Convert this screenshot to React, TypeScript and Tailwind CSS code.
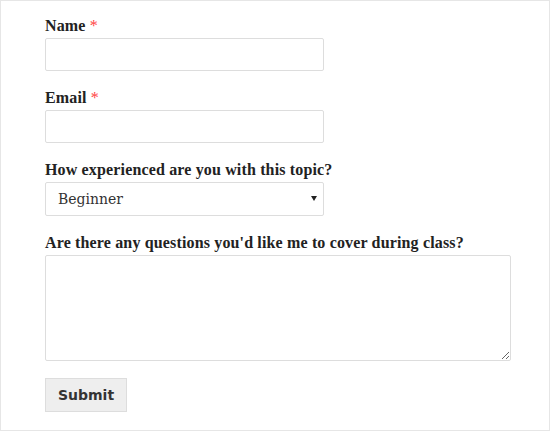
import React from 'react';

const labelCls = "block text-[16px] leading-[22px] font-bold tracking-[0.15px] text-[#222] mb-px [font-family:'Liberation_Serif',serif]";
const boxCls = "block bg-white border border-[#dddddd] rounded-[2px] outline-none";

const Required = () => <span className="text-[#ff4444] font-normal"> *</span>;

const App: React.FC = () => {
  return (
    <div className="w-[550px] h-[431px] bg-white border border-[#e6e6e6] pl-[44px] pt-[14px]">
      <form onSubmit={(e) => e.preventDefault()}>
        <div className="mb-[16px]">
          <label className={labelCls}>Name<Required /></label>
          <input type="text" className={`${boxCls} w-[279px] h-[33px]`} />
        </div>

        <div className="mb-[16px]">
          <label className={labelCls}>Email<Required /></label>
          <input type="email" className={`${boxCls} w-[279px] h-[33px]`} />
        </div>

        <div className="mb-[16px]">
          <label className={labelCls}>How experienced are you with this topic?</label>
          <div className="relative w-[279px]">
            <select
              defaultValue="Beginner"
              className={`${boxCls} appearance-none w-[279px] h-[34px] pl-[12px] text-[14px] text-[#333] [font-family:'DejaVu_Serif',serif]`}
            >
              <option>Beginner</option>
              <option>Intermediate</option>
              <option>Advanced</option>
            </select>
            {/* dropdown caret */}
            <svg className="absolute right-[7px] top-[14px] pointer-events-none" width="6" height="5" viewBox="0 0 6 5">
              <path d="M0 0h6L3 5z" fill="#222" />
            </svg>
          </div>
        </div>

        <div className="mb-[17px]">
          <label className={labelCls}>Are there any questions you'd like me to cover during class?</label>
          <textarea className={`${boxCls} w-[466px] h-[106px]`} />
        </div>

        <button
          type="submit"
          className="w-[82px] h-[34px] bg-[#eeeeee] border border-[#dddddd] text-[14px] font-bold text-[#333] [font-family:'DejaVu_Sans',sans-serif]"
        >
          Submit
        </button>
      </form>
    </div>
  );
};

export default App;
